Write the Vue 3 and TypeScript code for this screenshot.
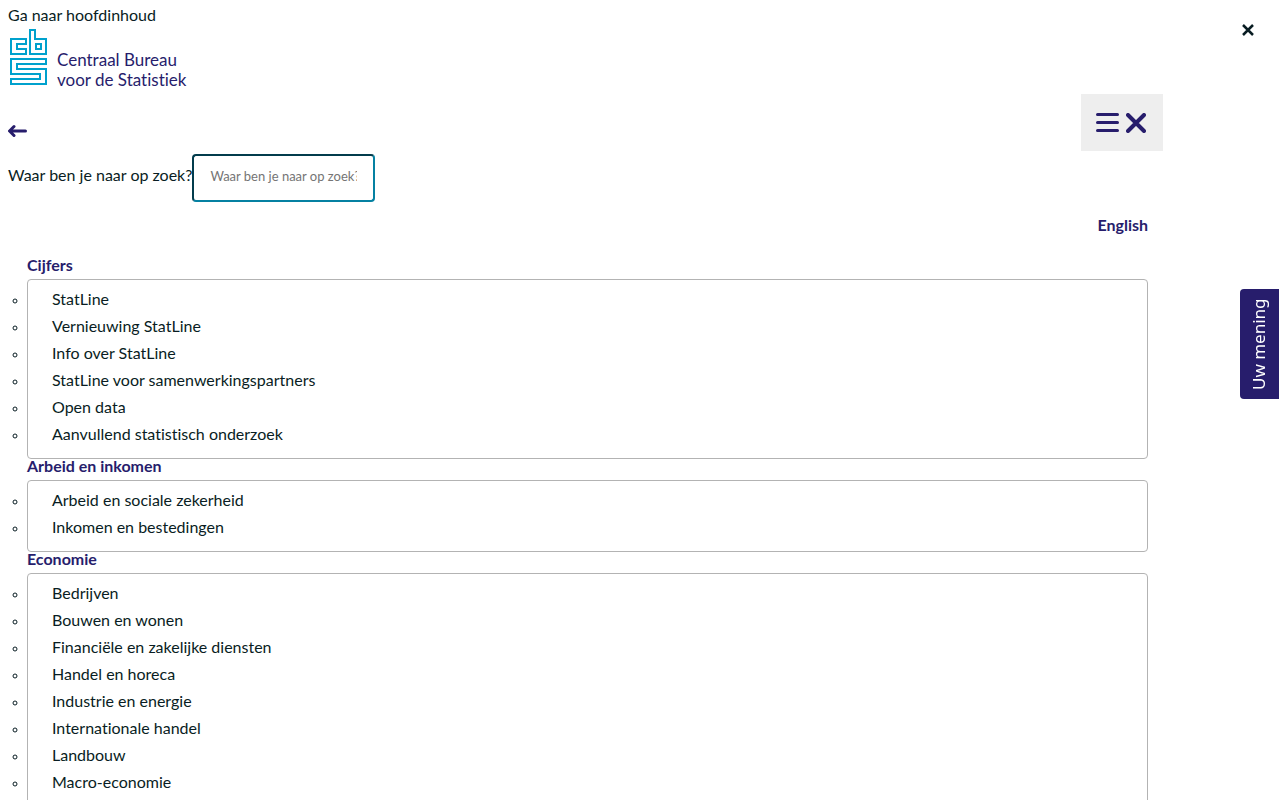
<script setup lang="ts">
interface Group {
  title: string
  items: string[]
}

const groups: Group[] = [
  {
    title: 'Cijfers',
    items: [
      'StatLine',
      'Vernieuwing StatLine',
      'Info over StatLine',
      'StatLine voor samenwerkingspartners',
      'Open data',
      'Aanvullend statistisch onderzoek',
    ],
  },
  {
    title: 'Arbeid en inkomen',
    items: ['Arbeid en sociale zekerheid', 'Inkomen en bestedingen'],
  },
  {
    title: 'Economie',
    items: [
      'Bedrijven',
      'Bouwen en wonen',
      'Financiële en zakelijke diensten',
      'Handel en horeca',
      'Industrie en energie',
      'Internationale handel',
      'Landbouw',
      'Macro-economie',
    ],
  },
]
</script>

<template>
  <div class="page">
    <a class="skip" href="#main">Ga naar hoofdinhoud</a>
    <button class="dismiss" type="button" aria-label="Sluiten">
      <svg width="12" height="12" viewBox="0 0 12 12"><path d="M1 1L11 11M11 1L1 11" /></svg>
    </button>

    <header class="container">
      <a class="logo" href="#" aria-label="Centraal Bureau voor de Statistiek">
        <svg width="40" height="58" viewBox="0 0 40 58">
          <path d="M3 11H18V16H9V21H18V26H3Z" />
          <path d="M22 2H27V11H38V26H22Z" />
          <path d="M28 16H33V21H28Z" />
          <path d="M3 31H38V36H9V41H38V56H3V51H32V46H3Z" />
        </svg>
        <span>Centraal Bureau<br />voor de Statistiek</span>
      </a>

      <div class="bar">
        <button class="back" type="button" aria-label="Terug">
          <svg width="20" height="14" viewBox="0 0 20 14"><path d="M6 2.500L1.500 7L6 11.500M2 7H17.500" /></svg>
        </button>
        <button class="toggle" type="button" aria-label="Menu">
          <svg width="23" height="20" viewBox="0 0 23 20"><path d="M1.500 1.500H21.500M1.500 9.500H21.500M1.500 17.500H21.500" /></svg>
          <svg class="cross" width="20" height="20" viewBox="0 0 20 20"><path d="M2 2L18 18M18 2L2 18" /></svg>
        </button>
      </div>

      <form class="search" @submit.prevent>
        <label for="search">Waar ben je naar op zoek?</label>
        <input id="search" type="text" placeholder="Waar ben je naar op zoek?" />
      </form>

      <div class="language"><a href="#">English</a></div>
    </header>

    <nav id="main" class="container menu">
      <section v-for="group in groups" :key="group.title">
        <a class="title" href="#">{{ group.title }}</a>
        <ul>
          <li v-for="item in group.items" :key="item"><a href="#">{{ item }}</a></li>
        </ul>
      </section>
    </nav>

    <button class="feedback" type="button">Uw mening</button>
  </div>
</template>

<style>
body {
  margin: 0;
  background: #fff;
}
</style>

<style scoped>
.page {
  padding: 5px 8px 0;
  font: 16px/20px Lato, "Liberation Sans", sans-serif;
  font-variant-ligatures: none;
  color: #091d23;
}
a {
  color: inherit;
  text-decoration: none;
}
button {
  margin: 0;
  padding: 0;
  border: 0;
  background: none;
  cursor: pointer;
}
svg {
  display: block;
  fill: none;
  stroke: #271d6c;
  stroke-width: 3;
  stroke-linecap: round;
}
.skip {
  display: block;
  width: fit-content;
}
.dismiss {
  position: absolute;
  top: 24px;
  right: 26px;
}
.dismiss svg {
  stroke: #091d23;
  stroke-width: 2.5;
  stroke-linecap: butt;
  overflow: visible;
}
.container {
  max-width: 1140px;
}
.logo {
  display: flex;
  align-items: flex-end;
  gap: 9px;
  width: fit-content;
  margin-top: 3px;
  color: #271d6c;
  font-size: 17px;
}
.logo svg {
  stroke: #00a1cd;
  stroke-width: 2;
}
.logo span {
  margin-bottom: -4px;
}
.bar {
  display: flex;
  justify-content: space-between;
  align-items: center;
  margin-top: 8px;
  margin-right: -15px;
}
.back {
  margin-top: 16px;
}
.toggle {
  display: flex;
  align-items: center;
  gap: 7px;
  padding: 19px 17px 18px 15px;
  background: #eee;
}
.toggle .cross {
  stroke-width: 4;
}
.search {
  display: flex;
  align-items: center;
  margin-top: 3px;
}
.search label {
  margin-bottom: 6px;
}
.search input {
  box-sizing: border-box;
  width: 183px;
  height: 48px;
  padding: 0 16px 4px;
  border: 2px solid #0581a2;
  border-top-color: #033c4c;
  border-left-color: #033c4c;
  border-radius: 4px;
  background: #fff;
  font: 13px/20px Lato, "Liberation Sans", sans-serif;
}
.search input::placeholder {
  color: #757575;
}
.language {
  margin-top: 13px;
  text-align: right;
  font-weight: 700;
  color: #271d6c;
}
.menu {
  box-sizing: border-box;
  margin-top: 21px;
  padding-left: 19px;
}
.title {
  display: block;
  height: 23px;
  line-height: 18px;
  color: #271d6c;
  font-weight: 700;
}
section + section .title {
  height: 21px;
  line-height: 14px;
}
ul {
  margin: 0;
  padding: 8px 0;
  border: 1px solid #b3b3b3;
  border-radius: 4px;
  list-style: circle;
}
li {
  padding-left: 24px;
  line-height: 22px;
  padding-bottom: 5px;
}
li::marker {
  font-size: 13px;
}
.feedback {
  position: fixed;
  top: 289px;
  right: 1px;
  box-sizing: border-box;
  height: 110px;
  padding: 8px 8px 8px 10px;
  border-radius: 0 4px 4px 0;
  background: #271d6c;
  color: #fff;
  font: 17px/21px "Noto Sans", sans-serif;
  writing-mode: vertical-rl;
  transform: rotate(180deg);
}
</style>
